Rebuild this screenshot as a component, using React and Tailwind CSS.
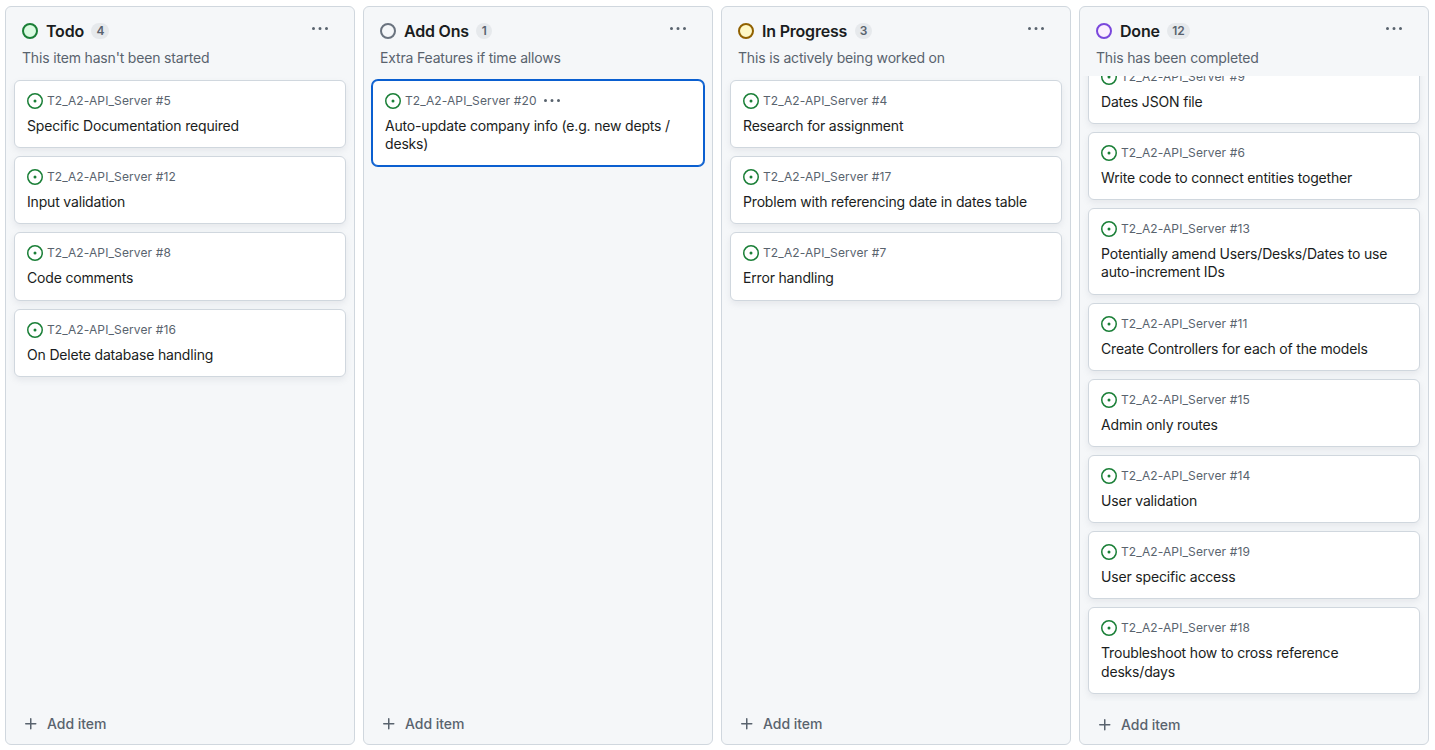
import React from "react";

const repo = "T2_A2-API_Server";

const columns = [
  {
    name: "Todo",
    count: 4,
    description: "This item hasn't been started",
    dot: "border-[#1a7f37] bg-[#dafbe1]",
    items: [
      [5, "Specific Documentation required"],
      [12, "Input validation"],
      [8, "Code comments"],
      [16, "On Delete database handling"],
    ],
  },
  {
    name: "Add Ons",
    count: 1,
    description: "Extra Features if time allows",
    dot: "border-[#6a737f] bg-[#f5f7f9]",
    selected: 20,
    items: [[20, "Auto-update company info (e.g. new depts / desks)"]],
  },
  {
    name: "In Progress",
    count: 3,
    description: "This is actively being worked on",
    dot: "border-[#916100] bg-[#fff8c5]",
    items: [
      [4, "Research for assignment"],
      [17, "Problem with referencing date in dates table"],
      [7, "Error handling"],
    ],
  },
  {
    name: "Done",
    count: 12,
    description: "This has been completed",
    dot: "border-[#7a47dc] bg-[#fbefff]",
    scrolled: true,
    items: [
      [9, "Dates JSON file"],
      [6, "Write code to connect entities together"],
      [13, "Potentially amend Users/Desks/Dates to use auto-increment IDs"],
      [11, "Create Controllers for each of the models"],
      [15, "Admin only routes"],
      [14, "User validation"],
      [19, "User specific access"],
      [18, "Troubleshoot how to cross reference desks/days"],
    ],
  },
];

function Icon({ children, className = "" }) {
  return (
    <svg viewBox="0 0 16 16" className={`size-4 shrink-0 fill-current ${className}`}>
      {children}
    </svg>
  );
}

function OpenIcon() {
  return (
    <Icon className="text-[#1a7f37]">
      <path d="M8 9.5a1.5 1.5 0 1 0 0-3 1.5 1.5 0 0 0 0 3Z" />
      <path d="M8 0a8 8 0 1 1 0 16A8 8 0 0 1 8 0ZM1.5 8a6.5 6.5 0 1 0 13 0 6.5 6.5 0 0 0-13 0Z" />
    </Icon>
  );
}

function MoreIcon({ className }) {
  return (
    <Icon className={className}>
      <path d="M8 9a1.5 1.5 0 1 0 0-3 1.5 1.5 0 0 0 0 3ZM1.5 9a1.5 1.5 0 1 0 0-3 1.5 1.5 0 0 0 0 3Zm13 0a1.5 1.5 0 1 0 0-3 1.5 1.5 0 0 0 0 3Z" />
    </Icon>
  );
}

function PlusIcon() {
  return (
    <Icon>
      <path d="M7.75 2a.75.75 0 0 1 .75.75V7h4.25a.75.75 0 0 1 0 1.5H8.5v4.25a.75.75 0 0 1-1.5 0V8.5H2.75a.75.75 0 0 1 0-1.5H7V2.75A.75.75 0 0 1 7.75 2Z" />
    </Icon>
  );
}

function Card({ number, title, selected }) {
  return (
    <article
      className={`shrink-0 rounded-md border bg-white p-3 ${
        selected
          ? "border-[#0a5fd0] ring-1 ring-[#0a5fd0]"
          : "border-[#d0d7de] shadow-[0_3px_6px_rgba(140,149,159,0.15)]"
      }`}
    >
      <div className="flex h-4 items-center text-[#59636e]">
        <OpenIcon />
        <span className="ml-1 text-xs tracking-[0.12px]">
          {repo} #{number}
        </span>
        {selected && <MoreIcon className="ml-[7px]" />}
      </div>
      <h3 className="mt-2 text-sm leading-[18.2px] tracking-[-0.175px] text-[#1a1d21]">{title}</h3>
    </article>
  );
}

function Column({ column }) {
  return (
    <section className="flex h-[739px] w-[350px] shrink-0 flex-col rounded-md border border-[#d0d7de] bg-[#f5f7f9]">
      <header className="h-[69px] shrink-0 px-4 pt-3">
        <div className="flex h-6 items-center">
          <span className={`size-4 rounded-full border-2 ${column.dot}`} />
          <h2 className="ml-2 text-base font-semibold tracking-[-0.2px] text-[#1a1d21]">{column.name}</h2>
          <span className="ml-[7.5px] flex h-4 min-w-4 items-center justify-center rounded-full bg-[#e6e9ec] px-[5px] text-xs font-semibold text-[#59636e]">
            {column.count}
          </span>
          <button className="mr-[10px] mb-1 ml-auto text-[#59636e]">
            <MoreIcon />
          </button>
        </div>
        <p className="mt-[5px] text-sm leading-5 tracking-[-0.17px] text-[#59636e]">{column.description}</p>
      </header>
      <div
        className={`flex min-h-0 flex-1 flex-col gap-2 overflow-hidden px-2 ${
          column.scrolled ? "justify-end pb-[7.2px]" : "pt-1"
        }`}
      >
        {column.items.map(([number, title]) => (
          <Card key={number} number={number} title={title} selected={column.selected === number} />
        ))}
      </div>
      <button
        className={`flex shrink-0 items-center gap-2 px-[17px] text-sm font-medium text-[#59636e] ${
          column.scrolled ? "h-[43px] pt-[5px]" : "h-10 pb-[1px]"
        }`}
      >
        <PlusIcon />
        <span className="tracking-[-0.04px]">Add item</span>
      </button>
    </section>
  );
}

export default function App() {
  return (
    <main className="flex h-[750px] w-[1435px] gap-2 overflow-hidden bg-white pt-[6px] pl-[5px] font-['Inter',sans-serif]">
      {columns.map((column) => (
        <Column key={column.name} column={column} />
      ))}
    </main>
  );
}
